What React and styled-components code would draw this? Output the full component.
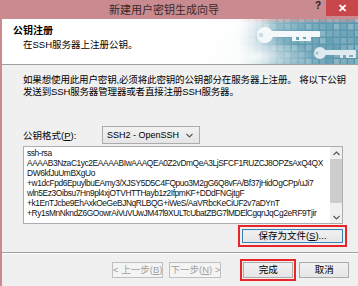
import React from "react"
import styled, { createGlobalStyle } from "styled-components"

const GlobalStyle = createGlobalStyle`
  html, body {
    margin: 0;
    padding: 0;
    background: #c98b8f;
  }
  body {
    font-family: "Liberation Sans", "Noto Sans CJK SC", sans-serif;
  }
`

const Window = styled.div`
  width: 358px;
  height: 286px;
  display: flex;
  flex-direction: column;
  background: #c98b8f;
  overflow: hidden;
`

const TitleBar = styled.div`
  height: 19px;
  display: flex;
  align-items: center;
  flex-shrink: 0;
`

const Title = styled.div`
  flex: 1;
  text-align: center;
  font-size: 11px;
  color: #3a2a2b;
  padding-left: 16px;
  font-family: "Noto Sans CJK SC", sans-serif;
  line-height: 19px;
`

const Help = styled.span`
  width: 12px;
  font-size: 10px;
  font-weight: 700;
  color: #2a1c1d;
  text-align: center;
  margin-right: 2px;
  align-self: flex-start;
  line-height: 12px;
`

const Close = styled.div`
  width: 32px;
  height: 16px;
  align-self: flex-start;
  background: #c8474b;
  color: #fff;
  font-size: 11px;
  font-weight: 700;
  display: flex;
  align-items: center;
  justify-content: center;
`

const Frame = styled.div`
  height: 267px;
  margin-left: 2px;
  background: #f0f0f0;
  display: flex;
  flex-direction: column;
`

const Header = styled.div`
  height: 45px;
  background: #fff;
  border-bottom: 1px solid #a0a0a0;
  display: flex;
  flex-shrink: 0;
`

const HeaderText = styled.div`
  flex: 1;
  padding: 4px 0 0 11px;
`

const HeaderTitle = styled.div`
  font-size: 10px;
  font-weight: 700;
  color: #000;
  line-height: 14px;
  font-family: "Noto Sans CJK SC", sans-serif;
`

const HeaderSub = styled.div`
  font-size: 9.5px;
  color: #000;
  line-height: 14px;
  padding-left: 10px;
  margin-top: 1px;
`

const Content = styled.div`
  height: 178px;
  padding: 9px 13px 0 21px;
  box-sizing: border-box;
  display: flex;
  flex-direction: column;
  font-size: 9.5px;
  color: #000;
`

const Paragraph = styled.p`
  margin: 0;
  line-height: 12px;
  white-space: nowrap;
  letter-spacing: -0.15px;
`

const FormatRow = styled.div`
  display: flex;
  align-items: center;
  margin-top: 28px;
  height: 18px;
`

const Label = styled.span`
  width: 79px;
  white-space: nowrap;
`

const Select = styled.div`
  width: 98px;
  height: 18px;
  border: 1px solid #acacac;
  background: linear-gradient(#f2f2f2, #e5e5e5);
  display: flex;
  align-items: center;
  justify-content: space-between;
  padding: 0 6px 0 4px;
  box-sizing: border-box;
  font-size: 9px;
  white-space: nowrap;
`

const Chevron = styled.svg`
  width: 7px;
  height: 5px;
`

const KeyBox = styled.div`
  margin-top: 2px;
  height: 78px;
  width: 320px;
  border: 1px solid #abadb3;
  background: #fff;
  display: flex;
  box-sizing: border-box;
`

const KeyText = styled.div`
  flex: 1;
  padding: 1px 0 0 3px;
  font-size: 8.4px;
  letter-spacing: -0.4px;
  line-height: 10px;
  white-space: pre;
  overflow: hidden;
  color: #111;
`

const ScrollBar = styled.div`
  width: 12px;
  display: flex;
  flex-direction: column;
  align-items: center;
  background: #f0f0f0;
`

const Arrow = styled.div`
  height: 12px;
  display: flex;
  align-items: center;
  justify-content: center;
`

const Thumb = styled.div`
  width: 12px;
  height: 44px;
  background: #cdcdcd;
`

const Track = styled.div`
  flex: 1;
`

const SaveRow = styled.div`
  display: flex;
  justify-content: flex-end;
  margin-top: 5px;
  padding-right: 2px;
`

const Button = styled.button`
  font-family: "Liberation Sans", "Noto Sans CJK SC", sans-serif;
  font-size: 9.5px;
  white-space: nowrap;
  height: ${(p) => p.$h || 15}px;
  width: ${(p) => p.$w}px;
  padding: 0;
  border: 1px solid ${(p) => (p.$focus ? "#3c7fb1" : p.$disabled ? "#bfbfbf" : "#acacac")};
  background: ${(p) => (p.$disabled ? "#f4f4f4" : "linear-gradient(#f2f2f2, #e5e5e5)")};
  color: ${(p) => (p.$disabled ? "#a0a0a0" : "#000")};
  outline: ${(p) => (p.$marked ? "2px solid #e8262a" : "none")};
  outline-offset: ${(p) => p.$offset || 2}px;
  line-height: 1;
  box-shadow: ${(p) => (p.$focus ? "inset 0 0 0 1px #e3eef8" : "none")};
`

const Divider = styled.div`
  margin-top: 9px;
  border-top: 1px solid #a0a0a0;
  border-bottom: 1px solid #fff;
`

const Footer = styled.div`
  flex: 1;
  display: flex;
  align-items: center;
  padding: 0 9px 0 110px;
  gap: 6px;
`

const Spacer = styled.div`
  width: 10px;
`

const Banner = () => {
  const cells = []
  let s = 7
  for (let y = 0; y < 7; y++) {
    for (let x = 0; x < 24; x++) {
      s = (s * 9301 + 49297) % 233280
      const r = s / 233280
      cells.push(
        <rect
          key={`${x}-${y}`}
          x={x * 7 + 1}
          y={y * 7 - 2}
          width="5.5"
          height="5.5"
          fill="#ffffff"
          opacity={0.08 + r * 0.22}
        />
      )
    }
  }
  return (
    <svg width="158" height="45" viewBox="0 0 158 45">
      <defs>
        <linearGradient id="bg" x1="0" y1="0" x2="1" y2="0.3">
          <stop offset="0" stopColor="#ffffff" />
          <stop offset="0.18" stopColor="#ffffff" />
          <stop offset="0.45" stopColor="#8fb9c7" />
          <stop offset="0.7" stopColor="#5f9cb1" />
          <stop offset="1" stopColor="#5a97ad" />
        </linearGradient>
        <linearGradient id="fade" x1="0" y1="0" x2="1" y2="0">
          <stop offset="0" stopColor="#ffffff" stopOpacity="1" />
          <stop offset="0.25" stopColor="#ffffff" stopOpacity="0.9" />
          <stop offset="0.5" stopColor="#ffffff" stopOpacity="0" />
        </linearGradient>
        <radialGradient id="mist" cx="0.35" cy="0.85" r="0.4">
          <stop offset="0" stopColor="#ffffff" stopOpacity="0.8" />
          <stop offset="1" stopColor="#ffffff" stopOpacity="0" />
        </radialGradient>
      </defs>
      <rect width="158" height="45" fill="url(#bg)" />
      <rect width="158" height="3" fill="#c98b8f" opacity="0.5" />
      {cells}
      <rect width="158" height="45" fill="url(#fade)" />
      <rect width="158" height="45" fill="url(#mist)" />
      <g fill="#f4f8fa">
        <circle cx="65" cy="16" r="8" />
        <rect x="70" y="12" width="50" height="6" rx="1" />
        <path d="M92 18 h4 v3 h3 v-3 h4 v2 h3 v-2 h5 v4 h-19 Z" />
      </g>
      <circle cx="61" cy="16" r="2.2" fill="#c9dde5" />
      <g fill="#dfeaee">
        <circle cx="120" cy="34" r="6" />
        <rect x="123" y="31" width="33" height="5" rx="1" />
        <path d="M140 36 h3 v3 h3 v-3 h3 v2 h4 v-2 h3 v3 h-16 Z" />
      </g>
      <circle cx="117" cy="34" r="1.6" fill="#9fc0cd" />
    </svg>
  )
}

const ChevronIcon = ({ up }) => (
  <Chevron viewBox="0 0 7 5">
    <path
      d={up ? "M0.5 4 L3.5 1 L6.5 4" : "M0.5 1 L3.5 4 L6.5 1"}
      fill="none"
      stroke="#555"
      strokeWidth="1.1"
    />
  </Chevron>
)

const keyLines = [
  "ssh-rsa",
  "AAAAB3NzaC1yc2EAAAABIwAAAQEA0Z2vDmQeA3LjSFCF1RUZCJ8OPZsAxQ4QX",
  "DW6kfJuUmBXgUo",
  "+w1dcFpd6EpuylbuEAmy3/XJSY5D5C4FQpuo3M2gG6Q8vFA/Bf37jHidOgCPp/uJi7",
  "wln5Ez3Oibsu7Hn9pl4xjOTVHTTHayb1z2IfpmKF+DDdFNGjtgF",
  "+k1EnTJcbe9EhAxkOeGeBJNqRLBQG+iWeS/AaVRbcKeCiUF2v7aDYnT",
  "+Ry1sMnNkndZ6GOowrAiVuVUwJM47l9XULTcUbatZBG7lMDElCgqnJqCg2eRF9Tjir",
]

const App = () => (
  <>
    <GlobalStyle />
    <Window>
      <TitleBar>
        <Title>新建用户密钥生成向导</Title>
        <Help>?</Help>
        <Close>✕</Close>
      </TitleBar>
      <Frame>
        <Header>
          <HeaderText>
            <HeaderTitle>公钥注册</HeaderTitle>
            <HeaderSub>在SSH服务器上注册公钥。</HeaderSub>
          </HeaderText>
          <Banner />
        </Header>
        <Content>
          <Paragraph>
            如果想使用此用户密钥,必须将此密钥的公钥部分在服务器上注册。 将以下公钥
            <br />
            发送到SSH服务器管理器或者直接注册SSH服务器。
          </Paragraph>
          <FormatRow>
            <Label>
              公钥格式(<u>P</u>):
            </Label>
            <Select>
              <span>SSH2 - OpenSSH</span>
              <ChevronIcon />
            </Select>
          </FormatRow>
          <KeyBox>
            <KeyText>{keyLines.join("\n")}</KeyText>
            <ScrollBar>
              <Arrow>
                <ChevronIcon up />
              </Arrow>
              <Thumb />
              <Track />
              <Arrow>
                <ChevronIcon />
              </Arrow>
            </ScrollBar>
          </KeyBox>
          <SaveRow>
            <Button $w={101} $h={14} $focus $marked $offset={2}>
              保存为文件(<u>S</u>)...
            </Button>
          </SaveRow>
        </Content>
        <Divider />
        <Footer>
          <Button $w={54} $h={16} $disabled>
            &lt; 上一步(<u>B</u>)
          </Button>
          <Button $w={52} $h={16} $disabled>
            下一步(<u>N</u>) &gt;
          </Button>
          <Spacer />
          <Button $w={53} $h={16} $marked $offset={1}>
            完成
          </Button>
          <Button $w={52} $h={16}>
            取消
          </Button>
        </Footer>
      </Frame>
    </Window>
  </>
)

export default App
